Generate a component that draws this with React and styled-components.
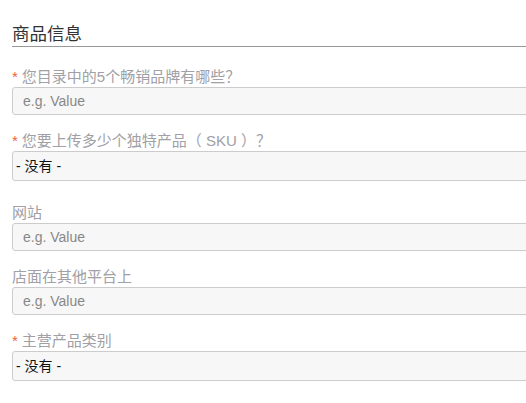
import styled, { createGlobalStyle } from 'styled-components';

const FIELDS = [
  { id: 'brands', label: '您目录中的5个畅销品牌有哪些？', required: true, type: 'input' },
  { id: 'sku', label: '您要上传多少个独特产品（ SKU ）？', required: true, type: 'select' },
  { id: 'website', label: '网站', required: false, type: 'input' },
  { id: 'stores', label: '店面在其他平台上', required: false, type: 'input' },
  { id: 'category', label: '主营产品类别', required: true, type: 'select' },
];

export default function App() {
  return (
    <>
      <GlobalStyle />
      <Page>
        <SectionTitle>商品信息</SectionTitle>
        <Form>
          {FIELDS.map((field) => (
            <Field key={field.id} $select={field.type === 'select'}>
              <Label htmlFor={field.id}>
                {field.required && <Star>*</Star>}
                {field.label}
              </Label>
              {field.type === 'select' ? (
                <Select id={field.id} defaultValue="">
                  <option value="">- 没有 -</option>
                </Select>
              ) : (
                <Input id={field.id} placeholder="e.g. Value" />
              )}
            </Field>
          ))}
        </Form>
      </Page>
    </>
  );
}

const GlobalStyle = createGlobalStyle`
  html, body {
    margin: 0;
    overflow: hidden;
    background: #fff;
  }
  body {
    font-family: 'Liberation Sans', 'Noto Sans CJK SC', sans-serif;
  }
`;

const Page = styled.div`
  width: 620px;
  padding: 22px 0 0 12px;
`;

const SectionTitle = styled.h2`
  margin: 0;
  font-size: 17.5px;
  font-weight: 400;
  line-height: 24px;
  color: #333;
  border-bottom: 1px solid #999;
`;

const Form = styled.div`
  display: flex;
  flex-direction: column;
  padding-top: 20px;
`;

const Field = styled.div`
  display: flex;
  flex-direction: column;
  margin-bottom: ${({ $select }) => ($select ? '22px' : '16px')};
`;

const Label = styled.label`
  font-size: 15px;
  line-height: 20px;
  color: #a0a0a6;
`;

const Star = styled.span`
  color: #f0643c;
  margin-right: 4px;
`;

const Input = styled.input`
  box-sizing: border-box;
  height: 28px;
  padding: 0 10px;
  border: 1px solid #ccc;
  border-radius: 3px;
  background: #f7f7f7;
  font-family: inherit;
  font-size: 14px;
  color: #333;
  outline: none;
  &::placeholder { color: #888; }
`;

const Select = styled.select`
  box-sizing: border-box;
  height: 30px;
  padding: 0 3px;
  border: 1px solid #ccc;
  border-radius: 3px;
  background: #f7f7f7;
  font-family: inherit;
  font-size: 14px;
  color: #111;
  appearance: none;
  outline: none;
`;
